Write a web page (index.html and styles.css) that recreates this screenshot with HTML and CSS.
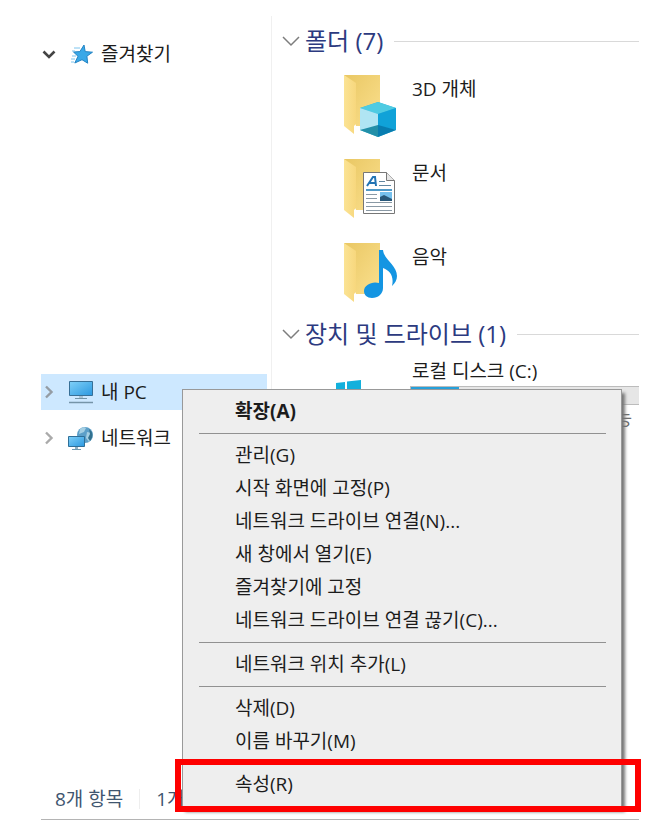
FILE: index.html
```
<!DOCTYPE html>
<html lang="ko">
  <head>
    <meta charset="UTF-8" />
    <meta name="viewport" content="width=device-width, initial-scale=1.0" />
    <link rel="stylesheet" href="styles.css">
    <title>내 PC</title>
  </head>
  <body>
    <div class="window">
      <div class="columns">
        <nav class="sidebar">
          <div class="group">
            <a href="#" class="node">
              <svg class="arrow" viewBox="0 0 16 16"><path d="M2.500 5.500l5.500 5.500 5.500-5.500" fill="none" stroke="#444" stroke-width="2.600" /></svg>
              <svg class="icon" viewBox="0 0 26 26">
                <path d="M16 4l1.200 6.600 7.300.6-5.600 4 .8 7-5.700-3.500-7.200 3.300 3.200-6.700-4.500-4.300 6.400-.4z" fill="#38a8e8" stroke="#2484c4" />
                <path d="M6 7h6M4 10h3M4 15h4M3 18h4M3 21h3" stroke="#7cc4ee" stroke-width="1" />
              </svg>
              즐겨찾기
            </a>
          </div>
          <a href="#" class="node selected">
            <svg class="arrow" viewBox="0 0 16 16"><path d="M5 2.500l5.500 5.500-5.500 5.500" fill="none" stroke="#949ca4" stroke-width="2.400" /></svg>
            <svg class="icon" viewBox="0 0 26 26">
              <defs>
                <linearGradient id="screen" x1="0" y1="0" x2="1" y2="1">
                  <stop offset="0" stop-color="#7fd0f8" />
                  <stop offset="1" stop-color="#2b98e0" />
                </linearGradient>
              </defs>
              <path d="M1.500 2.500h23v14h-23z" fill="url(#screen)" stroke="#376f96" />
              <path d="M11 17h4v2h-4z" fill="#a9c3d3" />
              <path d="M7 19.500h12" stroke="#7194a8" />
              <path d="M1 23.500h24" stroke="#7594a8" stroke-width="1.500" />
            </svg>
            내 PC
          </a>
          <a href="#" class="node">
            <svg class="arrow" viewBox="0 0 16 16"><path d="M5 2.500l5.500 5.500-5.500 5.500" fill="none" stroke="#aaa" stroke-width="2.400" /></svg>
            <svg class="icon" viewBox="0 0 26 26">
              <circle cx="17" cy="10" r="8" fill="#5c9fc8" />
              <path d="M12 4c3-2 5-2 6-1l-2 4-5 2zM19 7l5 1 1 4-4 5-3-4z" fill="#a5cfe3" />
              <path d="M21 4c4 3 5 8 1 12l-2-3 2-4z" fill="#33718f" />
              <path d="M.500 11.500h16v10h-16z" fill="url(#screen)" stroke="#2f6f98" />
              <path d="M7 22h3v2H7z" fill="#8faebf" />
              <path d="M4 24.500h9" stroke="#6f99b0" />
            </svg>
            네트워크
          </a>
        </nav>
        <main class="content">
          <h2 class="heading">
            <svg class="chevron" viewBox="0 0 18 18"><path d="M1 5l8 8 8-8" fill="none" stroke="#7d7d7d" stroke-width="1.500" /></svg>
            폴더 (7)
          </h2>
          <ul class="folders">
            <li>
              <svg class="folder" viewBox="0 0 56 64">
                <defs>
                  <linearGradient id="back" x1="0" y1="0" x2="1" y2="1">
                    <stop offset="0" stop-color="#e9c763" />
                    <stop offset="1" stop-color="#fbe08e" />
                  </linearGradient>
                  <linearGradient id="front" x1="0" y1="0" x2="1" y2="0">
                    <stop offset="0" stop-color="#fbe394" />
                    <stop offset="1" stop-color="#f7d77d" />
                  </linearGradient>
                </defs>
                <path d="M2 1h36v51H14z" fill="url(#back)" />
                <path d="M2 1l12 8v41l-2 2v8L2 52z" fill="url(#front)" />
                <path d="M36 28l18 6v22l-18 7-18-7V34z" fill="#35b5d8" />
                <path d="M36 28l18 6-18 6-18-6z" fill="#4fcbe2" />
                <path d="M18 34l18 6v14l-18 2z" fill="#b0e5f3" />
                <path d="M36 40l18-6v22l-18-4z" fill="#10a2d8" />
                <path d="M36 51l18 5-18 7z" fill="#087db0" />
                <path d="M18 56l18-5v12z" fill="#228fa8" />
              </svg>
              <span>3D 개체</span>
            </li>
            <li>
              <svg class="folder" viewBox="0 0 56 64">
                <path d="M2 1h36v51H14z" fill="url(#back)" />
                <path d="M2 1l12 8v41l-2 2v8L2 52z" fill="url(#front)" />
                <path d="M21.500 14.500h23l8 8v33h-31z" fill="#fff" stroke="#777" />
                <path d="M44.500 14.500v8h8" fill="#e6e6e6" stroke="#777" />
                <path d="M25 28l6-9h2l1 9M27 25h6" fill="none" stroke="#2374b4" stroke-width="2" />
                <path d="M37 23.500h6M37 27.500h12" stroke="#6286a0" />
                <path d="M24 32h26" stroke="#1677b5" stroke-width="1.500" />
                <path d="M24 36.500h11M24 40.500h11M24 44.500h26M24 48.500h26M24 52.500h26" stroke="#8a99a5" />
                <path d="M38 34h12v9H38z" fill="#76c1ee" />
                <path d="M38 39l4-2 8 4v2H38z" fill="#28587a" />
              </svg>
              <span>문서</span>
            </li>
            <li>
              <svg class="folder" viewBox="0 0 56 64">
                <path d="M2 1h36v51H14z" fill="url(#back)" />
                <path d="M2 1l12 8v41l-2 2v8L2 52z" fill="url(#front)" />
                <path d="M37 8h4c1 10 14 15 14 26 0 4-2 7-5 10 2-9-1-15-9-18v20c0 6-5 10-11 10-5 0-8-3-8-7 0-6 8-10 15-8z" fill="#1495e2" />
              </svg>
              <span>음악</span>
            </li>
          </ul>
          <h2 class="heading">
            <svg class="chevron" viewBox="0 0 18 18"><path d="M1 5l8 8 8-8" fill="none" stroke="#7d7d7d" stroke-width="1.500" /></svg>
            장치 및 드라이브 (1)
          </h2>
          <div class="drive">
            <svg class="drive-logo" viewBox="0 0 25 24">
              <path d="M0 3l9-1v9H0zM11 1.500L25 0v11H11zM0 13h9v9l-9-1zM11 13h14v11l-14-2z" fill="#13b0dc" />
            </svg>
            <div class="drive-info">
              <span>로컬 디스크 (C:)</span>
              <div class="usage"><div class="used" style="width: 21%"></div></div>
              <span class="free">능</span>
            </div>
          </div>
        </main>
      </div>
      <footer class="status">
        <span>8개 항목</span>
        <span class="chosen">1개</span>
      </footer>

      <div class="menu">
        <button class="item default">확장(A)</button>
        <hr>
        <button class="item">관리(G)</button>
        <button class="item">시작 화면에 고정(P)</button>
        <button class="item">네트워크 드라이브 연결(N)...</button>
        <button class="item">새 창에서 열기(E)</button>
        <button class="item">즐겨찾기에 고정</button>
        <button class="item">네트워크 드라이브 연결 끊기(C)...</button>
        <hr>
        <button class="item">네트워크 위치 추가(L)</button>
        <hr>
        <button class="item">삭제(D)</button>
        <button class="item">이름 바꾸기(M)</button>
        <hr>
        <button class="item marked">속성(R)</button>
      </div>
    </div>
  </body>
</html>
```
FILE: styles.css
```
* {
  box-sizing: border-box;
  margin: 0;
  padding: 0;
}
body {
  display: flex;
  min-height: 100vh;
  padding: 16px 27px 20px 41px;
  background: #fff;
  color: #1c1c1c;
  font: 19px/30px "Open Sans", "Noto Sans CJK KR", sans-serif;
}
.window {
  position: relative;
  display: flex;
  flex: 1;
  flex-direction: column;
  min-width: 0;
  border-bottom: 1px solid #b4b4b4;
}
.columns {
  display: flex;
  flex: 1;
}

/* navigation tree */
.sidebar {
  display: flex;
  flex-direction: column;
  gap: 10px;
  width: 231px;
  padding: 20px 4px 0 0;
  border-right: 1px solid #f0f0f0;
}
.group {
  min-height: 328px;
}
.node {
  display: flex;
  align-items: center;
  height: 36px;
  color: inherit;
  text-decoration: none;
}
.selected {
  background: #cde8ff;
}
.arrow {
  width: 16px;
  height: 16px;
  margin-right: 11px;
}
.icon {
  width: 26px;
  height: 26px;
  margin-right: 7px;
}

/* folder list */
.content {
  flex: 1;
  min-width: 0;
  padding: 9px 0 0 10px;
}
.heading {
  display: flex;
  align-items: center;
  color: #2c3a80;
  font-size: 24px;
  font-weight: normal;
  line-height: 32px;
  white-space: nowrap;
}
.heading::after {
  content: "";
  flex: 1;
  height: 1px;
  margin-left: 11px;
  background: #d9d9d9;
}
.chevron {
  width: 18px;
  height: 18px;
  margin-right: 5px;
}
.folders {
  padding-top: 9px;
  list-style: none;
}
.folders li {
  display: flex;
  gap: 14px;
  height: 84px;
  padding: 8px 0 0 60px;
}
.folder {
  width: 56px;
  height: 64px;
}
.drive {
  display: flex;
  padding: 6px 0 0 54px;
}
.drive-logo {
  width: 25px;
  height: 24px;
  margin: 24px 49px 0 0;
}
.drive-info {
  flex: 1;
  padding-left: 2px;
}
.usage {
  height: 19px;
  margin-left: -2px;
  border: 1px solid #bcbcbc;
  border-right: 0;
  background: #e6e6e6;
}
.used {
  height: 100%;
  background: #26a0da;
}
.free {
  display: block;
  padding-right: 7px;
  color: #6d6d6d;
  font-size: 18px;
  line-height: 26px;
  text-align: right;
}
.status {
  display: flex;
  align-items: center;
  padding: 0 14px 5px;
  color: #3f5670;
}
.status .chosen {
  margin-left: 16px;
  padding-left: 16px;
  border-left: 1px solid #eee;
  line-height: 20px;
}

/* context menu */
.menu {
  position: absolute;
  top: 373px;
  left: 141px;
  width: 440px;
  padding: 5px 3px;
  border: 1px solid #999;
  background: #eee;
  box-shadow: 3px 4px 3px #777;
}
.menu hr {
  height: 1px;
  margin: 5px 12px 5px 13px;
  border: 0;
  background: #919191;
}
.item {
  position: relative;
  display: block;
  width: 100%;
  height: 33px;
  padding: 0 0 2px 49px;
  border: 0;
  background: none;
  color: #1c1c1c;
  font: inherit;
  text-align: left;
}
.default {
  font-weight: bold;
}
.marked {
  padding-bottom: 4px;
}
.marked::after {
  content: "";
  position: absolute;
  top: -10px;
  right: -23px;
  bottom: -10px;
  left: -11px;
  border: 6px solid #fe0000;
}
```
